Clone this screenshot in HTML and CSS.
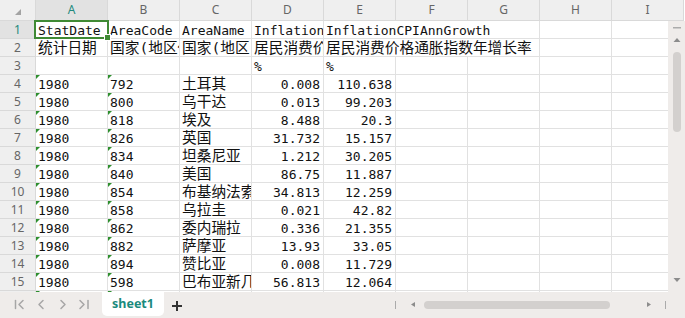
FILE: index.html
```html
<!DOCTYPE html>
<html lang="zh">
<head>
<meta charset="utf-8">
<title>sheet1</title>
<link rel="stylesheet" href="styles.css">
</head>
<body>
<div class="app">
  <div class="sheet">
    <div class="grid">
      <div class="corner"><svg width="36" height="20" viewBox="0 0 36 20"><polygon points="21,9 21,15 15,15" fill="#a3a3a3"/></svg></div>
      <div class="ch sel">A</div><div class="ch">B</div><div class="ch">C</div><div class="ch">D</div><div class="ch">E</div><div class="ch">F</div><div class="ch">G</div><div class="ch">H</div><div class="ch">I</div>

      <div class="rh sel">1</div><div class="cell">StatDate</div><div class="cell">AreaCode</div><div class="cell">AreaName</div><div class="cell">InflationGDPDeflator</div><div class="cell wide">InflationCPIAnnGrowth</div><div class="cell"></div><div class="cell"></div>

      <div class="rh">2</div><div class="cell"><span class="zh">统计日期</span></div><div class="cell"><span class="zh">国家(地区代码)</span></div><div class="cell"><span class="zh">国家(地区)名称</span></div><div class="cell"><span class="zh">居民消费价格指数</span></div><div class="cell wide"><span class="zh">居民消费价格通胀指数年增长率</span></div><div class="cell"></div><div class="cell"></div>

      <div class="rh">3</div><div class="cell"></div><div class="cell"></div><div class="cell"></div><div class="cell">%</div><div class="cell">%</div><div class="cell"></div><div class="cell"></div><div class="cell"></div><div class="cell"></div>

      <div class="rh">4</div><div class="cell t">1980</div><div class="cell t">792</div><div class="cell"><span class="zh">土耳其</span></div><div class="cell num">0.008</div><div class="cell num">110.638</div><div class="cell"></div><div class="cell"></div><div class="cell"></div><div class="cell"></div>

      <div class="rh">5</div><div class="cell t">1980</div><div class="cell t">800</div><div class="cell"><span class="zh">乌干达</span></div><div class="cell num">0.013</div><div class="cell num">99.203</div><div class="cell"></div><div class="cell"></div><div class="cell"></div><div class="cell"></div>

      <div class="rh">6</div><div class="cell t">1980</div><div class="cell t">818</div><div class="cell"><span class="zh">埃及</span></div><div class="cell num">8.488</div><div class="cell num">20.3</div><div class="cell"></div><div class="cell"></div><div class="cell"></div><div class="cell"></div>

      <div class="rh">7</div><div class="cell t">1980</div><div class="cell t">826</div><div class="cell"><span class="zh">英国</span></div><div class="cell num">31.732</div><div class="cell num">15.157</div><div class="cell"></div><div class="cell"></div><div class="cell"></div><div class="cell"></div>

      <div class="rh">8</div><div class="cell t">1980</div><div class="cell t">834</div><div class="cell"><span class="zh">坦桑尼亚</span></div><div class="cell num">1.212</div><div class="cell num">30.205</div><div class="cell"></div><div class="cell"></div><div class="cell"></div><div class="cell"></div>

      <div class="rh">9</div><div class="cell t">1980</div><div class="cell t">840</div><div class="cell"><span class="zh">美国</span></div><div class="cell num">86.75</div><div class="cell num">11.887</div><div class="cell"></div><div class="cell"></div><div class="cell"></div><div class="cell"></div>

      <div class="rh">10</div><div class="cell t">1980</div><div class="cell t">854</div><div class="cell"><span class="zh">布基纳法索</span></div><div class="cell num">34.813</div><div class="cell num">12.259</div><div class="cell"></div><div class="cell"></div><div class="cell"></div><div class="cell"></div>

      <div class="rh">11</div><div class="cell t">1980</div><div class="cell t">858</div><div class="cell"><span class="zh">乌拉圭</span></div><div class="cell num">0.021</div><div class="cell num">42.82</div><div class="cell"></div><div class="cell"></div><div class="cell"></div><div class="cell"></div>

      <div class="rh">12</div><div class="cell t">1980</div><div class="cell t">862</div><div class="cell"><span class="zh">委内瑞拉</span></div><div class="cell num">0.336</div><div class="cell num">21.355</div><div class="cell"></div><div class="cell"></div><div class="cell"></div><div class="cell"></div>

      <div class="rh">13</div><div class="cell t">1980</div><div class="cell t">882</div><div class="cell"><span class="zh">萨摩亚</span></div><div class="cell num">13.93</div><div class="cell num">33.05</div><div class="cell"></div><div class="cell"></div><div class="cell"></div><div class="cell"></div>

      <div class="rh">14</div><div class="cell t">1980</div><div class="cell t">894</div><div class="cell"><span class="zh">赞比亚</span></div><div class="cell num">0.008</div><div class="cell num">11.729</div><div class="cell"></div><div class="cell"></div><div class="cell"></div><div class="cell"></div>

      <div class="rh">15</div><div class="cell t">1980</div><div class="cell t">598</div><div class="cell"><span class="zh">巴布亚新几内亚</span></div><div class="cell num">56.813</div><div class="cell num">12.064</div><div class="cell"></div><div class="cell"></div><div class="cell"></div><div class="cell"></div>

      <div class="rh">16</div><div class="cell t">1980</div><div class="cell t">768</div><div class="cell"><span class="zh">多哥</span></div><div class="cell num">0.012</div><div class="cell num">12.334</div><div class="cell"></div><div class="cell"></div><div class="cell"></div><div class="cell"></div>
    </div>

    <div class="selection"><div class="handle"></div></div>

    <div class="vscroll">
      <svg width="17" height="271" viewBox="0 0 17 271">
        <rect x="5" y="6" width="8" height="1.5" fill="#ababab"/>
        <polygon points="9,17 12.5,21 5.5,21" fill="#8c8c8c"/>
        <rect x="5" y="31" width="8" height="80" rx="4" fill="#d3d0ce"/>
        <polygon points="5.5,257 12.5,257 9,261" fill="#8c8c8c"/>
      </svg>
    </div>
  </div>

  <div class="tabbar">
    <svg class="nav" width="100" height="26" viewBox="0 0 100 26">
      <g fill="none" stroke="#a6a6a6" stroke-width="1.5" stroke-linecap="round" stroke-linejoin="round">
        <line x1="15.5" y1="8.5" x2="15.5" y2="16.5"/>
        <polyline points="23,8.5 19,12.5 23,16.5"/>
        <polyline points="43,8.5 39,12.5 43,16.5"/>
        <polyline points="61,8.5 65,12.5 61,16.5"/>
        <polyline points="80,8.5 84,12.5 80,16.5"/>
        <line x1="88" y1="8.5" x2="88" y2="16.5"/>
      </g>
    </svg>
    <div class="tab">sheet1</div>
    <svg class="plus" width="10" height="10" viewBox="0 0 10 10">
      <g stroke="#333" stroke-width="2"><line x1="0" y1="5" x2="10" y2="5"/><line x1="5" y1="0" x2="5" y2="10"/></g>
    </svg>
    <svg class="hscroll" width="292" height="26" viewBox="0 0 292 26">
      <line x1="2.5" y1="9" x2="2.5" y2="17" stroke="#ababab" stroke-width="1"/>
      <polygon points="18,12.5 22,10 22,15" fill="#8c8c8c"/>
      <rect x="31" y="9" width="186" height="8" rx="4" fill="#d3d0ce"/>
      <polygon points="258,12.5 254,10 254,15" fill="#8c8c8c"/>
      <line x1="272.5" y1="9" x2="272.5" y2="17" stroke="#ababab" stroke-width="1"/>
    </svg>
  </div>
</div>
</body>
</html>
```

FILE: styles.css
```css
html, body {
  margin: 0;
  padding: 0;
  background: #fff;
}

body {
  width: 685px;
  height: 318px;
  overflow: hidden;
}

.app {
  width: 685px;
  height: 318px;
  display: flex;
  flex-direction: column;
}

.sheet {
  position: relative;
  height: 292px;
  overflow: hidden;
  flex: none;
}

.grid {
  display: grid;
  grid-template-columns: 36px repeat(9, 72px);
  grid-template-rows: 21px;
  grid-auto-rows: 18px;
}

.grid > div {
  box-sizing: border-box;
  border-right: 1px solid #e1e1e1;
  border-bottom: 1px solid #e1e1e1;
}

.corner {
  background: #efefef;
  border-color: #d9d9d9 !important;
}

.corner svg {
  display: block;
}

.ch {
  background: #efefef;
  border-color: #d9d9d9 !important;
  font: 12px "Noto Sans", sans-serif;
  color: #666;
  text-align: center;
  line-height: 20px;
}

.rh {
  background: #efefef;
  border-color: #d9d9d9 !important;
  font: 12px "Noto Sans", sans-serif;
  color: #666;
  text-align: center;
  line-height: 17px;
}

.ch.sel, .rh.sel {
  background: #e2e2e2;
  color: #1f8a7d;
}

.cell {
  position: relative;
  padding: 2px 2px 0 2px;
  font: 13px/15px "DejaVu Sans Mono", monospace;
  color: #111;
  white-space: nowrap;
  overflow: hidden;
}

.cell.wide {
  grid-column: span 3;
}

.cell.num {
  text-align: right;
  padding-right: 3px;
}

.zh {
  font-family: "DejaVu Sans Mono", "Noto Sans CJK SC", sans-serif;
  font-size: 14.7px;
  line-height: 0;
}

.cell.t::before {
  content: "";
  position: absolute;
  left: 0;
  top: 0;
  width: 0;
  height: 0;
  border-top: 4px solid #2e8f2e;
  border-right: 4px solid transparent;
}

.selection {
  position: absolute;
  left: 34px;
  top: 20px;
  width: 75px;
  height: 19px;
  box-sizing: border-box;
  border: 2px solid #3f8a34;
}

.handle {
  position: absolute;
  right: -4px;
  bottom: -4px;
  width: 5px;
  height: 5px;
  background: #3f8a34;
  border: 1px solid #fff;
}

.vscroll {
  position: absolute;
  left: 668px;
  top: 21px;
  width: 17px;
  bottom: 0;
  background: #efecea;
}

.vscroll svg {
  display: block;
}

.tabbar {
  height: 26px;
  background: #efecea;
  display: flex;
  align-items: center;
  flex: none;
}

.nav {
  display: block;
  flex: none;
}

.tab {
  align-self: flex-start;
  margin-left: 2px;
  width: 62px;
  height: 24px;
  background: #fff;
  border-radius: 0 0 5px 5px;
  font: bold 12.5px/24px "Noto Sans", sans-serif;
  color: #1a8a7d;
  text-align: center;
}

.plus {
  display: block;
  margin-left: 8px;
  margin-top: 1px;
  flex: none;
}

.hscroll {
  display: block;
  margin-left: auto;
  flex: none;
}
```
